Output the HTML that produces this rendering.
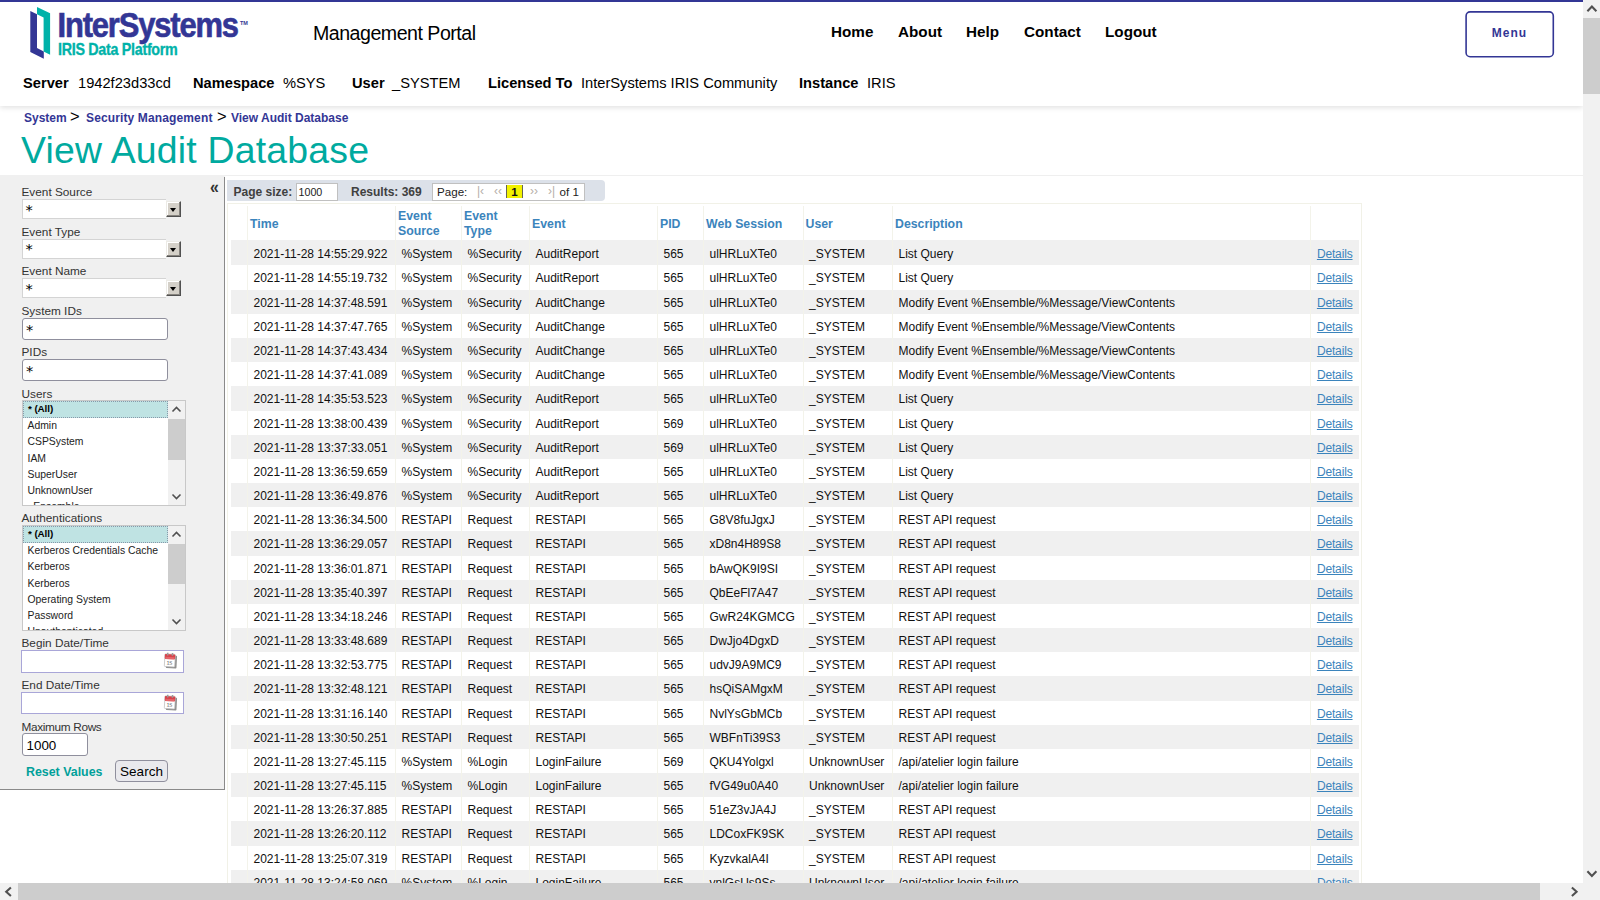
<!DOCTYPE html>
<html lang="en"><head><meta charset="utf-8"><title>View Audit Database</title>
<style>
html,body{margin:0;padding:0;}
body{width:1600px;height:900px;overflow:hidden;background:#fff;font-family:"Liberation Sans",Arial,sans-serif;font-size:12px;color:#000;position:relative;}
*{box-sizing:border-box;}
.abs{position:absolute;white-space:nowrap;}
#topbar{position:absolute;left:0;top:0;width:1583px;height:2px;background:#333695;z-index:5;}
#header{position:absolute;left:0;top:2px;width:1583px;height:104px;background:#fff;box-shadow:0 2px 5px rgba(0,0,0,0.11);z-index:4;}
#logo{position:absolute;left:0;top:0;}
#mp{left:313px;top:19px;font-size:19.6px;line-height:24px;color:#000;letter-spacing:-0.5px;}
.nav{top:21px;font-size:15.25px;line-height:18px;font-weight:bold;color:#000;}
#menu{position:absolute;left:1465px;top:9px;width:89px;height:47px;color:#333695;font-weight:bold;font-size:12px;letter-spacing:1px;text-align:center;line-height:44px;background:#fff;}
#menu svg{position:absolute;left:0;top:0;}
#menu span{position:relative;}
.inf{top:72px;font-size:14.67px;line-height:18px;color:#000;}
.inf b{font-weight:bold;}
.bc{top:109.5px;font-size:12px;line-height:16px;font-weight:bold;color:#333695;}
.bcs{top:106.5px;font-size:16.5px;line-height:18px;color:#000;font-weight:normal;}
#title{left:21px;top:129px;letter-spacing:0.2px;font-size:37.4px;line-height:42px;color:#00aa9f;font-weight:normal;}
#hr{position:absolute;left:0;top:175px;width:1583px;height:1px;background:#efefef;}
/* sidebar */
#side{position:absolute;left:0;top:175px;width:225px;height:615px;background:#f0f0f0;border-bottom:1px solid #8a8a8a;}
#side:after{content:"";position:absolute;right:0;top:1.5px;bottom:0;width:1px;background:#8a8a8a;}
#side .lb{position:absolute;left:21.5px;font-size:11.8px;line-height:14px;color:#333;white-space:nowrap;}
.sel{position:absolute;left:22px;width:144px;height:20px;background:#fff;border:1px solid #d4d4d4;border-right:none;color:#000;}
.ast{position:absolute;left:2.5px;top:1.5px;font-family:"DejaVu Sans","Liberation Sans",sans-serif;font-size:14.5px;line-height:16px;}
.inp .ast{top:3px;left:3px;}
.selb{position:absolute;left:166px;width:15px;height:16px;background:#d4d0c8;border:1px solid;border-color:#ecebe6 #505050 #505050 #ecebe6;box-shadow:inset -1px -1px 0 #86837e, inset 1px 1px 0 #fff;}
.selb:after{content:"";position:absolute;left:2.5px;top:6px;border:3.5px solid transparent;border-top:4px solid #000;border-bottom:none;}
.inp{position:absolute;left:22px;width:146px;height:22px;background:#fff;border:1px solid #8f8f9d;border-radius:3px;color:#000;}
.list{position:absolute;left:22px;width:164px;height:106px;background:#fff;border:1px solid #c8c8c8;overflow:hidden;}
.list .it{position:absolute;left:4.5px;margin-top:-1.2px;font-size:10.4px;line-height:13px;color:#222;white-space:nowrap;}
.list .sel0{position:absolute;left:0;top:0;width:145px;height:17px;background:#bfe3e3;border:1px dotted #89a;font-weight:bold;font-size:9.9px;letter-spacing:-0.1px;line-height:14px;padding-left:4px;color:#000;}
.lsb{position:absolute;left:145px;top:0;width:17px;height:104px;background:#f1f1f1;}
.lsb .th{position:absolute;left:0;width:17px;background:#cdcdcd;}
.lsb svg{position:absolute;left:0;}
.dt{position:absolute;left:21px;width:163px;height:22.5px;background:#fff;border:1px solid #a9a6d8;}
#mx{position:absolute;left:21.5px;top:558.4px;width:66.5px;height:22.6px;background:#fff;border:1px solid #8f8f9d;border-radius:3px;font-size:13.4px;line-height:23.6px;padding-left:4px;color:#000;}
#reset{left:26px;top:588.6px;font-size:12.4px;line-height:16px;font-weight:bold;color:#00a09a;}
#search{position:absolute;left:115px;top:585px;width:53px;height:22px;background:#e9e9ed;border:1px solid #8f8f9d;border-radius:4px;font-size:13.5px;line-height:22px;text-align:center;color:#000;}
#coll{left:210px;top:3.2px;font-size:18.5px;line-height:18px;font-weight:bold;color:#333;transform:scaleX(0.86);transform-origin:0 0;}
/* main */
#main{position:absolute;left:227px;top:178px;width:1356px;height:705px;overflow:hidden;}
#pager{position:absolute;left:0;top:2px;width:377.5px;height:21.3px;background:#dce1e9;border-radius:0 4px 4px 0;font-size:12px;}
#pager span{position:absolute;white-space:nowrap;}
#pager .pl{left:6.6px;top:5px;font-weight:bold;color:#404040;line-height:14px;font-size:12px;}
#pager .psz{left:69px;top:3px;width:41.5px;height:17.5px;background:#fff;border:1px solid #c0c0c0;font-size:10.7px;line-height:16px;padding-left:1.5px;color:#222;}
#pager .pr{left:124px;top:5px;font-weight:bold;color:#404040;line-height:14px;}
#pager .pg{left:205px;top:3px;width:153px;height:17.5px;font-size:11.6px;background:#fff;border:1px solid #c0c0c0;}
#pager .pgl{left:4px;top:1px;line-height:14px;color:#222;}
#pager .nv{top:0px;line-height:14px;color:#b5aea8;font-size:12px;}
#pager .n1{left:44px;} #pager .n2{left:61px;} #pager .n3{left:97px;} #pager .n4{left:115px;}
#pager .cur{left:73px;top:1px;width:17px;height:13.3px;background:#f2f200;border-left:1.5px solid #665;border-right:1.5px solid #665;font-weight:bold;text-align:center;line-height:14px;color:#111;}
#pager .of{left:126.5px;top:1px;line-height:14px;color:#222;}
#tbl{position:absolute;left:0;top:25px;width:1135.4px;border:1px solid #f1f1e7;padding:2px 2px 2px 3px;border-collapse:separate;border-spacing:0;table-layout:fixed;font-size:12px;background:#fff;}
#tbl th{height:34.2px;padding:2.4px 0 0 2px;text-align:left;vertical-align:middle;color:#3b84bc;font-weight:bold;font-size:12.3px;line-height:15px;border-left:1px solid #f3f3ea;white-space:nowrap;}
#tbl td{height:24.18px;padding:6px 0 0 5.5px;line-height:14px;border-left:1px solid #f3f3ea;white-space:nowrap;overflow:hidden;color:#111;vertical-align:top;}
#tbl tr.o td{background:#f0f0f0;}
#tbl tbody tr:first-child td{height:25.3px;padding-top:7px;}
#tbl .c0{border-left:none;}
#tbl td.lk{padding-left:5.5px;letter-spacing:-0.15px;}
#tbl td.lk a{color:#3b84bc;text-decoration:underline;}
/* scrollbars */
#vs{position:absolute;left:1582.5px;top:0;width:17.5px;height:882.5px;background:#f1f1f1;z-index:9;}
#hs{position:absolute;left:0;top:882.5px;width:1600px;height:17.5px;background:#f1f1f1;z-index:9;}
#vs .th{position:absolute;left:0;top:17.5px;width:17.5px;height:76.5px;background:#cdcdcd;}
#hs .th{position:absolute;left:17.5px;top:0;width:1522.5px;height:17.5px;background:#cdcdcd;}
#vs svg,#hs svg{position:absolute;}
#tbl th.c0{width:16px;} #tbl th.cT{width:148px;} #tbl th.cS{width:66px;} #tbl th.cY{width:68px;} #tbl th.cE{width:128px;} #tbl th.cP{width:46px;} #tbl th.cW{width:99.5px;} #tbl th.cU{width:89.5px;} #tbl th.cD{width:418.4px;} #tbl th.cL{width:49px;}

</style></head>
<body>
<div id="topbar"></div>
<div id="header">
<svg id="logo" width="260" height="64" viewBox="0 2 260 64">
<polygon points="30.3,11 37,14.3 37,48.1 43.8,51.4 43.8,58.7 30.3,52.1" fill="#333695"/>
<polygon points="37,7 50.1,13.2 50.1,54.7 43.6,51.4 43.6,17.6 37,14.3" fill="#00b2a9"/>
<g transform="translate(0,36.8) scale(1,1.07) translate(0,-36.8)"><text x="57.5" y="36.8" font-family="Liberation Sans, Arial, sans-serif" font-weight="bold" font-size="32" fill="#333695" stroke="#333695" stroke-width="0.6" letter-spacing="-1.2" textLength="180.4" lengthAdjust="spacingAndGlyphs">InterSystems</text></g>
<text x="240" y="24.5" font-family="Liberation Sans, Arial, sans-serif" font-weight="bold" font-size="5.5" fill="#333695">TM</text>
<g transform="translate(0,54.6) scale(1,1.1) translate(0,-54.6)"><text x="58" y="54.6" font-family="Liberation Sans, Arial, sans-serif" font-weight="bold" font-size="14.4" fill="#00b2a9" stroke="#00b2a9" stroke-width="0.3" letter-spacing="-0.3" textLength="119.5" lengthAdjust="spacingAndGlyphs">IRIS Data Platform</text></g>
</svg>
<div class="abs" id="mp">Management Portal</div>
<div class="abs nav" style="left:831px">Home</div>
<div class="abs nav" style="left:898px">About</div>
<div class="abs nav" style="left:966px">Help</div>
<div class="abs nav" style="left:1024px">Contact</div>
<div class="abs nav" style="left:1105px">Logout</div>
<div id="menu"><svg width="90" height="48"><rect x="1.1" y="0.9" width="87.2" height="44.8" rx="4" fill="#fff" stroke="#333695" stroke-width="1.6"/></svg><span>Menu</span></div>
<div class="abs inf" style="left:23px"><b>Server</b></div><div class="abs inf" style="left:78px">1942f23d33cd</div>
<div class="abs inf" style="left:193px"><b>Namespace</b></div><div class="abs inf" style="left:283px">%SYS</div>
<div class="abs inf" style="left:352px"><b>User</b></div><div class="abs inf" style="left:392px">_SYSTEM</div>
<div class="abs inf" style="left:488px"><b>Licensed To</b></div><div class="abs inf" style="left:581px">InterSystems IRIS Community</div>
<div class="abs inf" style="left:799px"><b>Instance</b></div><div class="abs inf" style="left:867px">IRIS</div>
</div>
<div class="abs bc" style="left:24px">System</div><div class="abs bcs" style="left:70px">&gt;</div>
<div class="abs bc" style="left:86px;letter-spacing:0.13px">Security Management</div><div class="abs bcs" style="left:217px">&gt;</div>
<div class="abs bc" style="left:231px">View Audit Database</div>
<div class="abs" id="title">View Audit Database</div>
<div id="hr"></div>

<div id="side">
<div class="abs" id="coll">&laquo;</div>
<div class="lb" style="top:10px">Event Source</div>
<div class="sel" style="top:24px"><span class="ast">*</span></div><div class="selb" style="top:26px"></div>
<div class="lb" style="top:50px">Event Type</div>
<div class="sel" style="top:63.5px"><span class="ast">*</span></div><div class="selb" style="top:66px"></div>
<div class="lb" style="top:89px">Event Name</div>
<div class="sel" style="top:103px"><span class="ast">*</span></div><div class="selb" style="top:105px"></div>
<div class="lb" style="top:129px">System IDs</div>
<div class="inp" style="top:143px"><span class="ast">*</span></div>
<div class="lb" style="top:170px">PIDs</div>
<div class="inp" style="top:184px"><span class="ast">*</span></div>
<div class="lb" style="top:212px">Users</div>
<div class="list" style="top:225px">
<div class="sel0">* (All)</div>
<div class="it" style="top:19px">Admin</div>
<div class="it" style="top:35px">CSPSystem</div>
<div class="it" style="top:52px">IAM</div>
<div class="it" style="top:68px">SuperUser</div>
<div class="it" style="top:84px">UnknownUser</div>
<div class="it" style="top:100px">_Ensemble</div>
<div class="lsb"><svg width="17" height="17" style="top:0"><path d="M4.5 10.5 L8.5 6.5 L12.5 10.5" fill="none" stroke="#505050" stroke-width="1.6"/></svg><div class="th" style="top:18px;height:40.5px"></div><svg width="17" height="17" style="top:87px"><path d="M4.5 6.5 L8.5 10.5 L12.5 6.5" fill="none" stroke="#505050" stroke-width="1.6"/></svg></div>
</div>
<div class="lb" style="top:336px">Authentications</div>
<div class="list" style="top:350px">
<div class="sel0">* (All)</div>
<div class="it" style="top:19px">Kerberos Credentials Cache</div>
<div class="it" style="top:35px">Kerberos</div>
<div class="it" style="top:52px">Kerberos</div>
<div class="it" style="top:68px">Operating System</div>
<div class="it" style="top:84px">Password</div>
<div class="it" style="top:100px">Unauthenticated</div>
<div class="lsb"><svg width="17" height="17" style="top:0"><path d="M4.5 10.5 L8.5 6.5 L12.5 10.5" fill="none" stroke="#505050" stroke-width="1.6"/></svg><div class="th" style="top:18px;height:39.5px"></div><svg width="17" height="17" style="top:87px"><path d="M4.5 6.5 L8.5 10.5 L12.5 6.5" fill="none" stroke="#505050" stroke-width="1.6"/></svg></div>
</div>
<div class="lb" style="top:461px">Begin Date/Time</div>
<div class="dt" style="top:475px"><svg class="cal" width="16" height="18" viewBox="0 0 16 18" style="position:absolute;left:140.5px;top:1px"><g transform="rotate(3 8 9)"><rect x="3.2" y="3.6" width="10.6" height="12.6" rx="0.8" fill="#8e8e8e"/><rect x="1.6" y="2.2" width="10.4" height="12.6" rx="0.8" fill="#fff" stroke="#b9b9b9" stroke-width="0.7"/><rect x="1.6" y="2.2" width="10.4" height="5" rx="0.8" fill="#d8434b"/><rect x="2.2" y="5" width="9.2" height="2.2" fill="#e4656b"/><rect x="3.6" y="1" width="1.5" height="2.6" fill="#9a9a9a"/><rect x="8.4" y="1" width="1.5" height="2.6" fill="#9a9a9a"/><text x="3.6" y="12.8" font-size="5.2" font-family="Liberation Sans, sans-serif" fill="#555">15</text></g></svg></div>
<div class="lb" style="top:503px">End Date/Time</div>
<div class="dt" style="top:516.5px"><svg class="cal" width="16" height="18" viewBox="0 0 16 18" style="position:absolute;left:140.5px;top:1px"><g transform="rotate(3 8 9)"><rect x="3.2" y="3.6" width="10.6" height="12.6" rx="0.8" fill="#8e8e8e"/><rect x="1.6" y="2.2" width="10.4" height="12.6" rx="0.8" fill="#fff" stroke="#b9b9b9" stroke-width="0.7"/><rect x="1.6" y="2.2" width="10.4" height="5" rx="0.8" fill="#d8434b"/><rect x="2.2" y="5" width="9.2" height="2.2" fill="#e4656b"/><rect x="3.6" y="1" width="1.5" height="2.6" fill="#9a9a9a"/><rect x="8.4" y="1" width="1.5" height="2.6" fill="#9a9a9a"/><text x="3.6" y="12.8" font-size="5.2" font-family="Liberation Sans, sans-serif" fill="#555">15</text></g></svg></div>
<div class="lb" style="top:545px;letter-spacing:-0.33px">Maximum Rows</div>
<div id="mx">1000</div>
<div class="abs" id="reset">Reset Values</div>
<div id="search">Search</div>
</div>

<div id="main">
<div id="pager"><span class="pl">Page size:</span><span class="psz">1000</span><span class="pr">Results: 369</span><span class="pg"><span class="pgl">Page:</span><span class="nv n1">|&lsaquo;</span><span class="nv n2">&lsaquo;&lsaquo;</span><span class="cur">1</span><span class="nv n3">&rsaquo;&rsaquo;</span><span class="nv n4">&rsaquo;|</span><span class="of">of 1</span></span></div>
<table id="tbl" cellspacing="0"><thead><tr>
<th class="c0">&nbsp;</th><th class="cT">Time</th><th class="cS">Event<br>Source</th><th class="cY">Event<br>Type</th><th class="cE">Event</th><th class="cP">PID</th><th class="cW">Web Session</th><th class="cU">User</th><th class="cD">Description</th><th class="cL">&nbsp;</th>
</tr></thead><tbody>
<tr class="o"><td class="c0">&nbsp;</td><td>2021-11-28 14:55:29.922</td><td>%System</td><td>%Security</td><td>AuditReport</td><td>565</td><td>ulHRLuXTe0</td><td>_SYSTEM</td><td>List Query</td><td class="lk"><a>Details</a></td></tr>
<tr class="e"><td class="c0">&nbsp;</td><td>2021-11-28 14:55:19.732</td><td>%System</td><td>%Security</td><td>AuditReport</td><td>565</td><td>ulHRLuXTe0</td><td>_SYSTEM</td><td>List Query</td><td class="lk"><a>Details</a></td></tr>
<tr class="o"><td class="c0">&nbsp;</td><td>2021-11-28 14:37:48.591</td><td>%System</td><td>%Security</td><td>AuditChange</td><td>565</td><td>ulHRLuXTe0</td><td>_SYSTEM</td><td>Modify Event %Ensemble/%Message/ViewContents</td><td class="lk"><a>Details</a></td></tr>
<tr class="e"><td class="c0">&nbsp;</td><td>2021-11-28 14:37:47.765</td><td>%System</td><td>%Security</td><td>AuditChange</td><td>565</td><td>ulHRLuXTe0</td><td>_SYSTEM</td><td>Modify Event %Ensemble/%Message/ViewContents</td><td class="lk"><a>Details</a></td></tr>
<tr class="o"><td class="c0">&nbsp;</td><td>2021-11-28 14:37:43.434</td><td>%System</td><td>%Security</td><td>AuditChange</td><td>565</td><td>ulHRLuXTe0</td><td>_SYSTEM</td><td>Modify Event %Ensemble/%Message/ViewContents</td><td class="lk"><a>Details</a></td></tr>
<tr class="e"><td class="c0">&nbsp;</td><td>2021-11-28 14:37:41.089</td><td>%System</td><td>%Security</td><td>AuditChange</td><td>565</td><td>ulHRLuXTe0</td><td>_SYSTEM</td><td>Modify Event %Ensemble/%Message/ViewContents</td><td class="lk"><a>Details</a></td></tr>
<tr class="o"><td class="c0">&nbsp;</td><td>2021-11-28 14:35:53.523</td><td>%System</td><td>%Security</td><td>AuditReport</td><td>565</td><td>ulHRLuXTe0</td><td>_SYSTEM</td><td>List Query</td><td class="lk"><a>Details</a></td></tr>
<tr class="e"><td class="c0">&nbsp;</td><td>2021-11-28 13:38:00.439</td><td>%System</td><td>%Security</td><td>AuditReport</td><td>569</td><td>ulHRLuXTe0</td><td>_SYSTEM</td><td>List Query</td><td class="lk"><a>Details</a></td></tr>
<tr class="o"><td class="c0">&nbsp;</td><td>2021-11-28 13:37:33.051</td><td>%System</td><td>%Security</td><td>AuditReport</td><td>569</td><td>ulHRLuXTe0</td><td>_SYSTEM</td><td>List Query</td><td class="lk"><a>Details</a></td></tr>
<tr class="e"><td class="c0">&nbsp;</td><td>2021-11-28 13:36:59.659</td><td>%System</td><td>%Security</td><td>AuditReport</td><td>565</td><td>ulHRLuXTe0</td><td>_SYSTEM</td><td>List Query</td><td class="lk"><a>Details</a></td></tr>
<tr class="o"><td class="c0">&nbsp;</td><td>2021-11-28 13:36:49.876</td><td>%System</td><td>%Security</td><td>AuditReport</td><td>565</td><td>ulHRLuXTe0</td><td>_SYSTEM</td><td>List Query</td><td class="lk"><a>Details</a></td></tr>
<tr class="e"><td class="c0">&nbsp;</td><td>2021-11-28 13:36:34.500</td><td>RESTAPI</td><td>Request</td><td>RESTAPI</td><td>565</td><td>G8V8fuJgxJ</td><td>_SYSTEM</td><td>REST API request</td><td class="lk"><a>Details</a></td></tr>
<tr class="o"><td class="c0">&nbsp;</td><td>2021-11-28 13:36:29.057</td><td>RESTAPI</td><td>Request</td><td>RESTAPI</td><td>565</td><td>xD8n4H89S8</td><td>_SYSTEM</td><td>REST API request</td><td class="lk"><a>Details</a></td></tr>
<tr class="e"><td class="c0">&nbsp;</td><td>2021-11-28 13:36:01.871</td><td>RESTAPI</td><td>Request</td><td>RESTAPI</td><td>565</td><td>bAwQK9I9SI</td><td>_SYSTEM</td><td>REST API request</td><td class="lk"><a>Details</a></td></tr>
<tr class="o"><td class="c0">&nbsp;</td><td>2021-11-28 13:35:40.397</td><td>RESTAPI</td><td>Request</td><td>RESTAPI</td><td>565</td><td>QbEeFl7A47</td><td>_SYSTEM</td><td>REST API request</td><td class="lk"><a>Details</a></td></tr>
<tr class="e"><td class="c0">&nbsp;</td><td>2021-11-28 13:34:18.246</td><td>RESTAPI</td><td>Request</td><td>RESTAPI</td><td>565</td><td>GwR24KGMCG</td><td>_SYSTEM</td><td>REST API request</td><td class="lk"><a>Details</a></td></tr>
<tr class="o"><td class="c0">&nbsp;</td><td>2021-11-28 13:33:48.689</td><td>RESTAPI</td><td>Request</td><td>RESTAPI</td><td>565</td><td>DwJjo4DgxD</td><td>_SYSTEM</td><td>REST API request</td><td class="lk"><a>Details</a></td></tr>
<tr class="e"><td class="c0">&nbsp;</td><td>2021-11-28 13:32:53.775</td><td>RESTAPI</td><td>Request</td><td>RESTAPI</td><td>565</td><td>udvJ9A9MC9</td><td>_SYSTEM</td><td>REST API request</td><td class="lk"><a>Details</a></td></tr>
<tr class="o"><td class="c0">&nbsp;</td><td>2021-11-28 13:32:48.121</td><td>RESTAPI</td><td>Request</td><td>RESTAPI</td><td>565</td><td>hsQiSAMgxM</td><td>_SYSTEM</td><td>REST API request</td><td class="lk"><a>Details</a></td></tr>
<tr class="e"><td class="c0">&nbsp;</td><td>2021-11-28 13:31:16.140</td><td>RESTAPI</td><td>Request</td><td>RESTAPI</td><td>565</td><td>NvlYsGbMCb</td><td>_SYSTEM</td><td>REST API request</td><td class="lk"><a>Details</a></td></tr>
<tr class="o"><td class="c0">&nbsp;</td><td>2021-11-28 13:30:50.251</td><td>RESTAPI</td><td>Request</td><td>RESTAPI</td><td>565</td><td>WBFnTi39S3</td><td>_SYSTEM</td><td>REST API request</td><td class="lk"><a>Details</a></td></tr>
<tr class="e"><td class="c0">&nbsp;</td><td>2021-11-28 13:27:45.115</td><td>%System</td><td>%Login</td><td>LoginFailure</td><td>569</td><td>QKU4Yolgxl</td><td>UnknownUser</td><td>/api/atelier login failure</td><td class="lk"><a>Details</a></td></tr>
<tr class="o"><td class="c0">&nbsp;</td><td>2021-11-28 13:27:45.115</td><td>%System</td><td>%Login</td><td>LoginFailure</td><td>565</td><td>fVG49u0A40</td><td>UnknownUser</td><td>/api/atelier login failure</td><td class="lk"><a>Details</a></td></tr>
<tr class="e"><td class="c0">&nbsp;</td><td>2021-11-28 13:26:37.885</td><td>RESTAPI</td><td>Request</td><td>RESTAPI</td><td>565</td><td>51eZ3vJA4J</td><td>_SYSTEM</td><td>REST API request</td><td class="lk"><a>Details</a></td></tr>
<tr class="o"><td class="c0">&nbsp;</td><td>2021-11-28 13:26:20.112</td><td>RESTAPI</td><td>Request</td><td>RESTAPI</td><td>565</td><td>LDCoxFK9SK</td><td>_SYSTEM</td><td>REST API request</td><td class="lk"><a>Details</a></td></tr>
<tr class="e"><td class="c0">&nbsp;</td><td>2021-11-28 13:25:07.319</td><td>RESTAPI</td><td>Request</td><td>RESTAPI</td><td>565</td><td>KyzvkalA4I</td><td>_SYSTEM</td><td>REST API request</td><td class="lk"><a>Details</a></td></tr>
<tr class="o"><td class="c0">&nbsp;</td><td>2021-11-28 13:24:58.069</td><td>%System</td><td>%Login</td><td>LoginFailure</td><td>565</td><td>vnlGsUs9Ss</td><td>UnknownUser</td><td>/api/atelier login failure</td><td class="lk"><a>Details</a></td></tr>
<tr class="e"><td class="c0">&nbsp;</td><td>2021-11-28 13:24:51.402</td><td>RESTAPI</td><td>Request</td><td>RESTAPI</td><td>565</td><td>KyzvkalA4I</td><td>_SYSTEM</td><td>REST API request</td><td class="lk"><a>Details</a></td></tr>
</tbody></table>
</div>
<div id="vs"><svg width="18" height="18" style="left:0;top:0"><path d="M4.4 11.3 L8.9 6.6 L13.4 11.3" fill="none" stroke="#505050" stroke-width="2.1"/></svg><div class="th"></div><svg width="18" height="18" style="left:0;top:865px"><path d="M4.4 6.2 L8.9 10.9 L13.4 6.2" fill="none" stroke="#505050" stroke-width="2.1"/></svg></div>
<div id="hs"><svg width="18" height="18" style="left:0;top:0"><path d="M10.9 4.5 L6.2 8.8 L10.9 13.1" fill="none" stroke="#505050" stroke-width="2.1"/></svg><div class="th"></div><svg width="18" height="18" style="left:1565px;top:0"><path d="M6.9 4.5 L11.6 8.8 L6.9 13.1" fill="none" stroke="#505050" stroke-width="2.1"/></svg></div>

</body></html>
